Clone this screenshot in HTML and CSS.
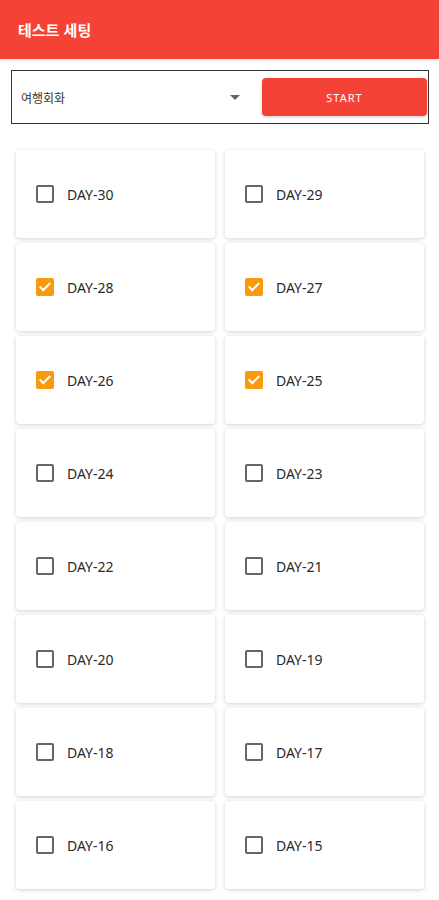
FILE: index.html
```html
<!DOCTYPE html>
<html lang="ko">
<head>
<meta charset="UTF-8">
<meta name="viewport" content="width=device-width, initial-scale=1.0">
<title>테스트 세팅</title>
<link rel="stylesheet" href="styles.css">
</head>
<body>
<header class="app-bar">테스트 세팅</header>

<div class="controls">
<div class="select">
<span class="select-value">여행회화</span>
<span class="select-arrow"></span>
</div>
<button class="start-button">START</button>
</div>

<div class="day-grid">
<label class="day-card"><span class="box"></span>DAY-30</label>
<label class="day-card"><span class="box"></span>DAY-29</label>
<label class="day-card"><span class="box checked"></span>DAY-28</label>
<label class="day-card"><span class="box checked"></span>DAY-27</label>
<label class="day-card"><span class="box checked"></span>DAY-26</label>
<label class="day-card"><span class="box checked"></span>DAY-25</label>
<label class="day-card"><span class="box"></span>DAY-24</label>
<label class="day-card"><span class="box"></span>DAY-23</label>
<label class="day-card"><span class="box"></span>DAY-22</label>
<label class="day-card"><span class="box"></span>DAY-21</label>
<label class="day-card"><span class="box"></span>DAY-20</label>
<label class="day-card"><span class="box"></span>DAY-19</label>
<label class="day-card"><span class="box"></span>DAY-18</label>
<label class="day-card"><span class="box"></span>DAY-17</label>
<label class="day-card"><span class="box"></span>DAY-16</label>
<label class="day-card"><span class="box"></span>DAY-15</label>
</div>
</body>
</html>
```

FILE: styles.css
```css
body {
margin: 0;
font-family: "Noto Sans", "Noto Sans CJK KR", sans-serif;
background-color: #fff;
color: #222;
}

.app-bar {
height: 59px;
background-color: #f44336;
color: #fff;
font-family: "Noto Sans CJK KR", sans-serif;
font-size: 15px;
font-weight: bold;
display: flex;
align-items: center;
padding-left: 18px;
box-shadow: 0 1px 3px rgba(0, 0, 0, 0.15);
}

.controls {
margin: 11px 10px 0 11px;
height: 52px;
border: 1px solid #333;
display: flex;
align-items: center;
}

.select {
flex: 1;
display: flex;
align-items: center;
padding-left: 9px;
padding-right: 22px;
}

.select-value {
flex: 1;
font-family: "Noto Sans CJK KR", sans-serif;
font-size: 12px;
color: #333;
}

.select-arrow {
width: 0;
height: 0;
border-left: 5px solid transparent;
border-right: 5px solid transparent;
border-top: 5px solid #666;
}

.start-button {
width: 165px;
height: 38px;
margin-right: 1px;
background-color: #f44336;
color: #fff;
border: none;
border-radius: 4px;
font-family: "Noto Sans", sans-serif;
font-size: 11px;
letter-spacing: 1px;
box-shadow: 0 1px 3px rgba(0, 0, 0, 0.2);
}

.day-grid {
display: grid;
grid-template-columns: 1fr 1fr;
gap: 5px 10px;
padding: 26px 15px 16px 16px;
}

.day-card {
height: 88px;
background-color: #fff;
border-radius: 4px;
box-shadow: 0 1px 4px rgba(0, 0, 0, 0.18);
display: flex;
align-items: center;
padding-left: 20px;
font-size: 14px;
color: #2a2a2a;
}

.box {
width: 14px;
height: 14px;
border: 2px solid #666;
border-radius: 2px;
margin-right: 13px;
position: relative;
}

.box.checked {
background-color: #f79a0e;
border-color: #f79a0e;
}

.box.checked::after {
content: "";
position: absolute;
left: 4px;
top: 0px;
width: 4px;
height: 9px;
border-right: 2px solid #fff;
border-bottom: 2px solid #fff;
transform: rotate(45deg);
}
```
